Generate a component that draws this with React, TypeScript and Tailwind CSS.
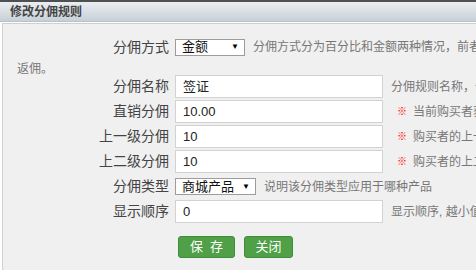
import React from "react";

const font = { fontFamily: '"Liberation Sans", "Noto Sans CJK SC", sans-serif' };

function Label({ children }: { children: React.ReactNode }) {
  return <span className="inline-block w-[152px] shrink-0 text-right text-[14px] text-[#444]">{children}</span>;
}

function TextInput({ value }: { value: string }) {
  return (
    <div className="ml-[6px] flex h-[23px] w-[208px] shrink-0 items-center border border-[#d2d2d2] bg-white pl-[7px] text-[13px] text-[#222]">
      {value}
    </div>
  );
}

function Select({ value, width }: { value: string; width: string }) {
  return (
    <div className={`ml-[6px] flex h-[17px] shrink-0 items-center justify-between border border-[#9c9c9c] bg-white pl-[6px] pr-[5px] text-[13px] text-[#111] ${width}`}>
      <span>{value}</span>
      <span className="text-[8px] text-black">▼</span>
    </div>
  );
}

function Note({ children, mark }: { children: React.ReactNode; mark?: boolean }) {
  return (
    <span className="ml-[8px] flex items-center whitespace-nowrap text-[12px] text-[#777]">
      {mark && <span className="ml-[6px] mr-[6px] text-[10px] font-bold text-[#ff0000]">※</span>}
      {children}
    </span>
  );
}

function Row({ children }: { children: React.ReactNode }) {
  return <div className="flex h-[25px] items-center">{children}</div>;
}

export default function App() {
  return (
    <div className="h-[270px] w-[476px] overflow-hidden bg-white" style={font}>
      <div className="h-[2px] bg-[#505050]" />
      <div className="flex h-[20px] items-center border-b border-[#b9c2ca] bg-gradient-to-b from-[#eaeef1] to-[#c8d0d7] pl-[10px] text-[12px] font-bold text-[#444]">
        修改分佣规则
      </div>
      <div className="h-px bg-white" />
      <div className="ml-[2px] h-[260px] w-[900px] border-l border-t border-[#cfcfcf] bg-[#f0f0f0] pl-[14px] pt-[12px]">
        <div className="flex h-[22px] items-center">
          <Label>分佣方式</Label>
          <Select value="金额" width="w-[70px]" />
          <Note>分佣方式分为百分比和金额两种情况，前者按订单商品价格的百分比计算，后者按固定金额</Note>
        </div>
        <div className="h-[16px] text-[12px] leading-[22px] text-[#777]">返佣。</div>

        <Row>
          <Label>分佣名称</Label>
          <TextInput value="签证" />
          <Note>分佣规则名称，便于后台管理识别</Note>
        </Row>
        <Row>
          <Label>直销分佣</Label>
          <TextInput value="10.00" />
          <Note mark>当前购买者获得的分佣</Note>
        </Row>
        <Row>
          <Label>上一级分佣</Label>
          <TextInput value="10" />
          <Note mark>购买者的上一级获得的分佣</Note>
        </Row>
        <Row>
          <Label>上二级分佣</Label>
          <TextInput value="10" />
          <Note mark>购买者的上二级获得的分佣</Note>
        </Row>
        <Row>
          <Label>分佣类型</Label>
          <Select value="商城产品" width="w-[81px]" />
          <Note>说明该分佣类型应用于哪种产品</Note>
        </Row>
        <Row>
          <Label>显示顺序</Label>
          <TextInput value="0" />
          <Note>显示顺序, 越小值越靠前</Note>
        </Row>

        <div className="mt-[12px] flex gap-[9px] pl-[161px]">
          <button className="h-[22px] w-[57px] rounded-[3px] border border-[#3f8d38] bg-[#4fa046] text-[13px] text-white">
            保&nbsp;&nbsp;存
          </button>
          <button className="h-[22px] w-[49px] rounded-[3px] border border-[#3f8d38] bg-[#4fa046] text-[13px] text-white">
            关闭
          </button>
        </div>
      </div>
    </div>
  );
}
